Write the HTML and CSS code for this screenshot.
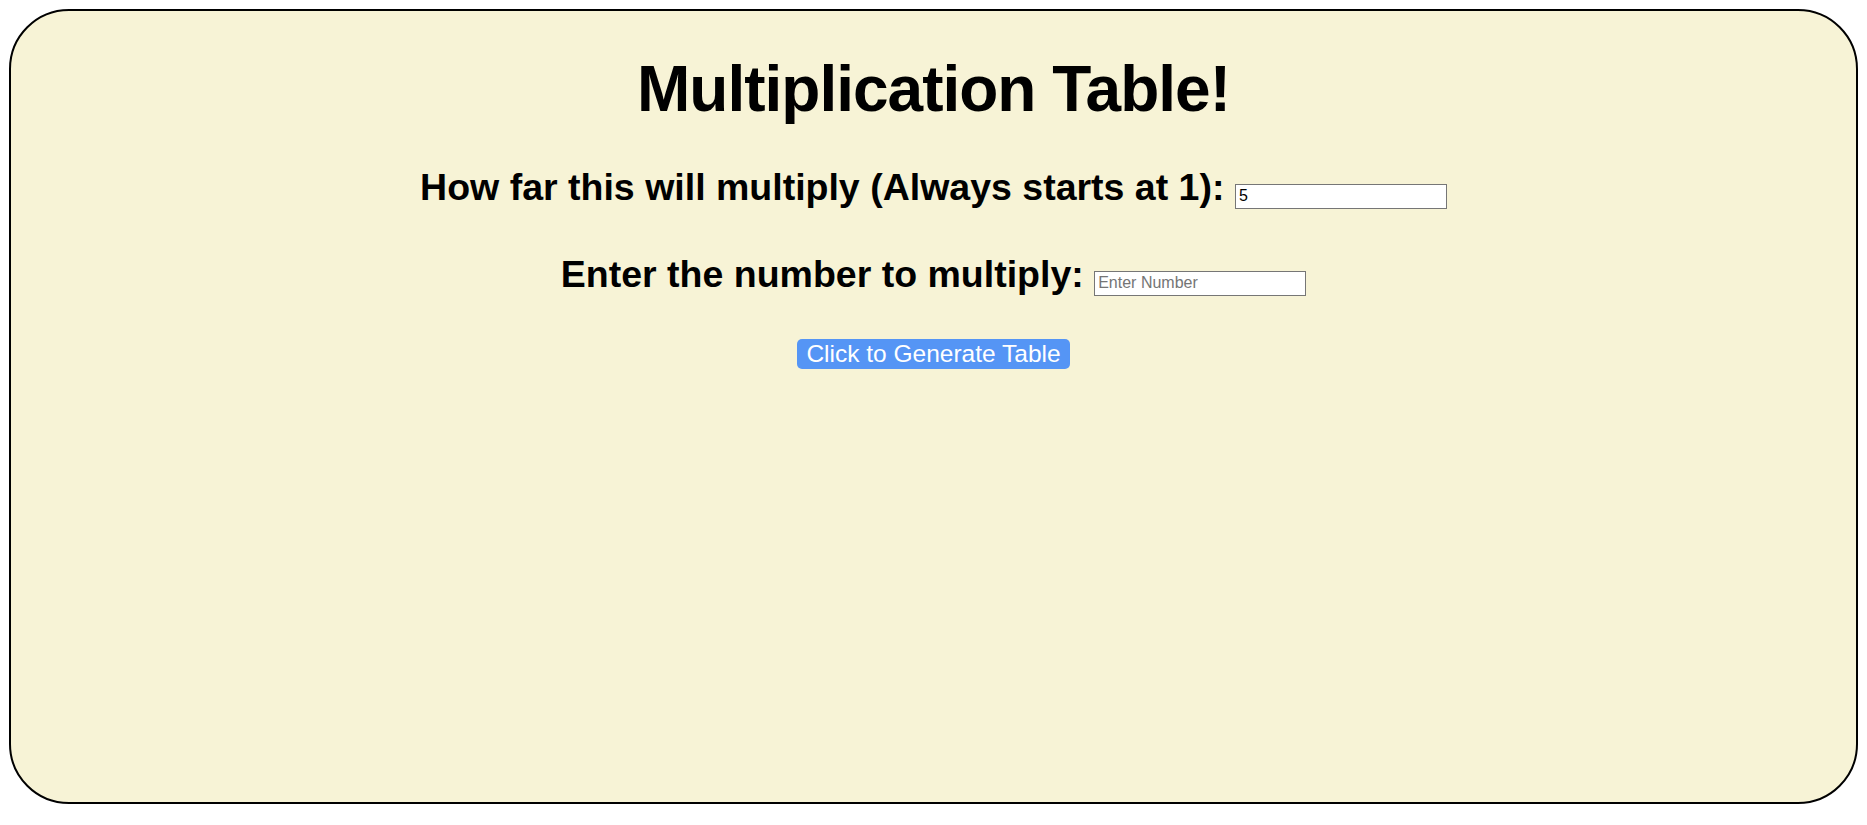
FILE: index.html
```html
<!DOCTYPE html>
<html lang="en">
<head>
<meta charset="utf-8">
<title>Multiplication Table!</title>
<link rel="stylesheet" href="styles.css">
</head>
<body>
<main class="card">
  <h1 class="title">Multiplication Table!</h1>
  <div class="row">
    <label class="label" for="limit">How far this will multiply (Always starts at 1):</label>
    <input class="field" id="limit" type="text" value="5">
  </div>
  <div class="row">
    <label class="label" for="num">Enter the number to multiply:</label>
    <input class="field" id="num" type="text" placeholder="Enter Number">
  </div>
  <div class="actions">
    <button class="btn" type="button">Click to Generate Table</button>
  </div>
</main>
</body>
</html>
```

FILE: styles.css
```css
html, body {
  margin: 0;
  padding: 0;
  background: #ffffff;
}

body {
  padding: 9px 9px 21px 9px;
  font-family: "Liberation Sans", Arial, sans-serif;
  color: #000;
}

.card {
  box-sizing: border-box;
  height: 795px;
  border: 2px solid #000;
  border-radius: 60px;
  background: #f7f3d6;
  display: flex;
  flex-direction: column;
  align-items: center;
  padding-top: 46px;
  gap: 43px;
}

.title {
  margin: 0 0 1px 0;
  font-size: 64px;
  line-height: 64px;
  font-weight: bold;
  letter-spacing: -1px;
}

.row {
  line-height: 44px;
  height: 44px;
  white-space: nowrap;
}

.label {
  font-size: 37.5px;
  font-weight: bold;
}

.field {
  box-sizing: border-box;
  width: 212px;
  height: 25px;
  margin-left: 6px;
  padding: 1px 3px;
  border: 1px solid #767676;
  border-radius: 0;
  background: #fff;
  font-family: "Liberation Sans", Arial, sans-serif;
  font-size: 16px;
  color: #000;
  vertical-align: -1px;
}

.field::placeholder {
  color: #757575;
}

.actions {
  display: flex;
}

.btn {
  box-sizing: border-box;
  height: 30px;
  padding: 0 9px;
  border: none;
  border-radius: 5px;
  background: #5595f5;
  color: #fff;
  font-family: "Liberation Sans", Arial, sans-serif;
  font-size: 24.5px;
  line-height: 30px;
}
```
